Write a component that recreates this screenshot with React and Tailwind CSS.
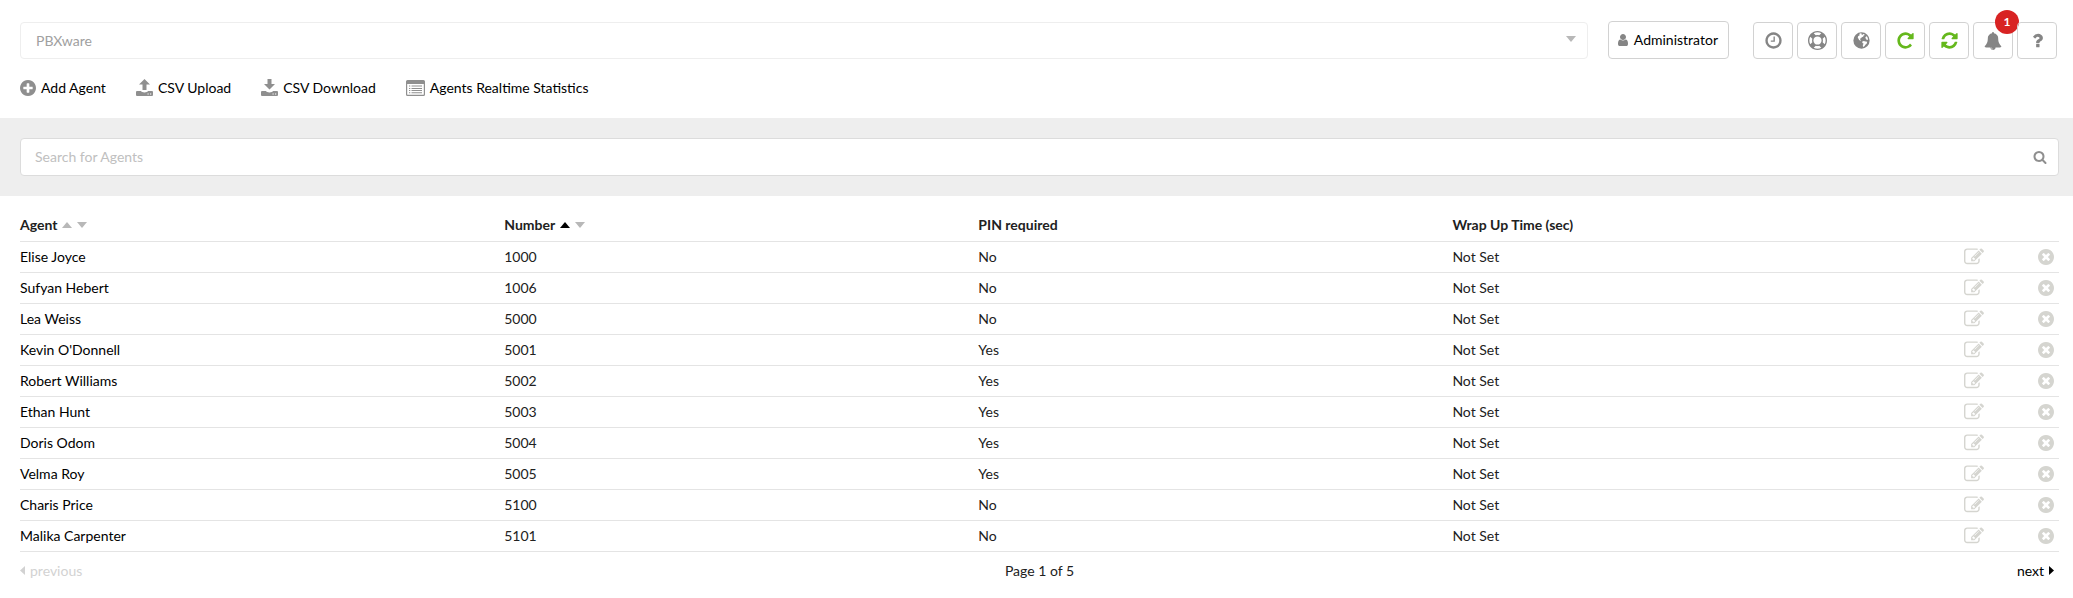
import React, { useState } from 'react';

const ICONS = {
  plus: 'M1344 960v-128q0-26-19-45t-45-19h-256v-256q0-26-19-45t-45-19h-128q-26 0-45 19t-19 45v256h-256q-26 0-45 19t-19 45v128q0 26 19 45t45 19h256v256q0 26 19 45t45 19h128q26 0 45-19t19-45v-256h256q26 0 45-19t19-45zm320-64q0 209-103 385.5t-279.5 279.5-385.5 103-385.5-103-279.5-279.5-103-385.5 103-385.5 279.5-279.5 385.5-103 385.5 103 279.5 279.5 103 385.5z',
  remove: 'M1277 1122q0-26-19-45l-181-181 181-181q19-19 19-45 0-27-19-46l-90-90q-19-19-46-19-26 0-45 19l-181 181-181-181q-19-19-45-19-27 0-46 19l-90 90q-19 19-19 46 0 26 19 45l181 181-181 181q-19 19-19 45 0 27 19 46l90 90q19 19 46 19 26 0 45-19l181-181 181 181q19 19 45 19 27 0 46-19l90-90q19-19 19-46zm387-226q0 209-103 385.5t-279.5 279.5-385.5 103-385.5-103-279.5-279.5-103-385.5 103-385.5 279.5-279.5 385.5-103 385.5 103 279.5 279.5 103 385.5z',
  edit: 'M888 1184l116-116-152-152-116 116v56h96v96h56zm440-720q-16-16-33 1l-350 350q-17 17-1 33t33-1l350-350q17-17 1-33zm80 594v190q0 119-84.5 203.5t-203.5 84.5h-832q-119 0-203.5-84.5t-84.5-203.5v-832q0-119 84.5-203.5t203.5-84.5h832q63 0 117 25 15 7 18 23 3 17-9 29l-49 49q-14 14-32 8-23-6-45-6h-832q-66 0-113 47t-47 113v832q0 66 47 113t113 47h832q66 0 113-47t47-113v-126q0-13 9-22l64-64q15-15 35-7t20 29zm-96-738l288 288-672 672h-288v-288zm444 132l-92 92-288-288 92-92q28-28 68-28t68 28l152 152q28 28 28 68t-28 68z',
  clock: 'M1024 544v448q0 14-9 23t-23 9h-320q-14 0-23-9t-9-23v-64q0-14 9-23t23-9h224v-352q0-14 9-23t23-9h64q14 0 23 9t9 23zm416 352q0-148-73-273t-198-198-273-73-273 73-198 198-73 273 73 273 198 198 273 73 273-73 198-198 73-273zm224 0q0 209-103 385.5t-279.5 279.5-385.5 103-385.5-103-279.5-279.5-103-385.5 103-385.5 279.5-279.5 385.5-103 385.5 103 279.5 279.5 103 385.5z',
  ring: 'M896 0q182 0 348 71t286 191 191 286 71 348-71 348-191 286-286 191-348 71-348-71-286-191-191-286-71-348 71-348 191-286 286-191 348-71zm0 128q-190 0-361 90l194 194q82-28 167-28t167 28l194-194q-171-90-361-90zm-678 1129l194-194q-28-82-28-167t28-167l-194-194q-90 171-90 361t90 361zm678 407q190 0 361-90l-194-194q-82 28-167 28t-167-28l-194 194q171 90 361 90zm0-384q159 0 271.5-112.5t112.5-271.5-112.5-271.5-271.5-112.5-271.5 112.5-112.5 271.5 112.5 271.5 271.5 112.5zm484-217l194 194q90-171 90-361t-90-361l-194 194q28 82 28 167t-28 167z',
  globe: 'M896 128a768 768 0 1 0 0 1536a768 768 0 1 0 0-1536zM700 260l120-40 110 30-40 90 90 30 60-90 110 20 60 70-110 60-50 110-130 40-60 110-110 30 10 90 90 50-50 50-130-60-70-150-60-90 50-130 120-60zM1330 500l100 50 70 160-20 150-90-20-60-110-80-60zM950 1010l150-70 180 60 150 20-50 180-120 100-90 140-130 60-20-170 80-120-110-90z',
  repeat: 'M1664 256v448q0 26-19 45t-45 19h-448q-42 0-59-40-17-39 14-69l138-138q-148-137-349-137-104 0-198.5 40.5t-163.5 109.5-109.5 163.5-40.5 198.5 40.5 198.5 109.5 163.5 163.5 109.5 198.5 40.5q119 0 225-52t179-147q7-10 23-12 15 0 25 9l137 138q9 8 9.5 20.5t-7.5 22.5q-109 132-264 204.5t-327 72.5q-156 0-298-61t-245-164-164-245-61-298 61-298 164-245 245-164 298-61q147 0 284.5 55.5t244.5 156.5l130-129q29-31 70-14 39 17 39 59z',
  refresh: 'M1639 1056q0 5-1 7-64 268-268 434.5t-478 166.5q-146 0-282.5-55t-243.5-157l-129 129q-19 19-45 19t-45-19-19-45v-448q0-26 19-45t45-19h448q26 0 45 19t19 45-19 45l-137 137q71 66 161 102t187 36q134 0 250-65t186-179q11-17 53-117 8-23 30-23h192q13 0 22.5 9.5t9.5 22.5zm25-800v448q0 26-19 45t-45 19h-448q-26 0-45-19t-19-45 19-45l138-138q-148-137-349-137-134 0-250 65t-186 179q-11 17-53 117-8 23-30 23h-199q-13 0-22.5-9.5t-9.5-22.5v-7q65-268 270-434.5t480-166.5q146 0 284 55.5t245 156.5l130-129q19-19 45-19t45 19 19 45z',
  bell: 'M912 1696q0-16-16-16-59 0-101.5-42.5t-42.5-101.5q0-16-16-16t-16 16q0 73 51.5 124.5t124.5 51.5q16 0 16-16zm816-288q0 52-38 90t-90 38h-448q0 106-75 181t-181 75-181-75-75-181h-448q-52 0-90-38t-38-90q50-42 91-88t85-119.5 74.5-158.5 50-206 19.5-260q0-152 117-282.5t307-158.5q-8-19-8-39 0-40 28-68t68-28 68 28 28 68q0 20-8 39 190 28 307 158.5t117 282.5q0 139 19.5 260t50 206 74.5 158.5 85 119.5 91 88z',
  question: 'M1088 1256v240q0 16-12 28t-28 12h-240q-16 0-28-12t-12-28v-240q0-16 12-28t28-12h240q16 0 28 12t12 28zm316-600q0 54-15.5 101t-35 76.5-55 59.5-57.5 43.5-61 35.5q-41 23-68.5 65t-27.5 67q0 17-12 32.5t-28 15.5h-240q-15 0-25.5-18.5t-10.5-37.5v-45q0-83 65-156.5t143-108.5q59-27 84-56t25-76q0-42-46.5-74t-107.5-32q-65 0-108 29-35 25-107 115-13 16-31 16-12 0-25-8l-164-125q-13-10-15.5-25t5.5-28q160-266 464-266 80 0 161 31t146 83 106 127.5 41 158.5z',
  search: 'M1216 832q0-185-131.5-316.5t-316.5-131.5-316.5 131.5-131.5 316.5 131.5 316.5 316.5 131.5 316.5-131.5 131.5-316.5zm512 832q0 52-38 90t-90 38q-54 0-90-38l-343-342q-179 124-399 124-143 0-273.5-55.5t-225-150-150-225-55.5-273.5 55.5-273.5 150-225 225-150 273.5-55.5 273.5 55.5 225 150 150 225 55.5 273.5q0 220-124 399l343 343q37 37 37 90z',
  user: 'M1536 1399q0 109-62.5 187t-150.5 78h-854q-88 0-150.5-78t-62.5-187q0-85 8.5-160.5t31.5-152 58.5-131 94-89 134.5-34.5q131 128 313 128t313-128q76 0 134.5 34.5t94 89 58.5 131 31.5 152 8.5 160.5zm-256-887q0 159-112.5 271.5t-271.5 112.5-271.5-112.5-112.5-271.5 112.5-271.5 271.5-112.5 271.5 112.5 112.5 271.5z',
};

// `tight` trims the empty margin around the round icons
function Icon({ name, tight, className }) {
  return (
    <svg
      viewBox={tight ? '128 128 1536 1536' : '0 0 1792 1792'}
      fill="currentColor"
      fillRule={name === 'globe' ? 'evenodd' : 'nonzero'}
      className={className}
      aria-hidden="true"
    >
      <path d={ICONS[name]} />
    </svg>
  );
}

function TrayIcon({ down }) {
  return (
    <svg viewBox="0 0 17 17" fill="currentColor" className="size-[17px] text-[#8f8f8f]" aria-hidden="true">
      <path d={down ? 'M6.5 0h4v5H14L8.500 10.500 3 5h3.500z' : 'M8.500 0L14 5.500h-3.500V11h-4V5.500H3z'} />
      <path fillRule="evenodd" d="M1 12h4c.6 1 1.800 1.400 3.500 1.400s2.900-.4 3.500-1.400h4q1 0 1 1v3q0 1-1 1H1q-1 0-1-1v-3q0-1 1-1zM11.500 14.500v1h1.200v-1zM14 14.500v1h1.200v-1z" />
    </svg>
  );
}

function ListIcon() {
  return (
    <svg viewBox="0 0 19 16" fill="currentColor" className="h-4 w-[19px] text-[#8f8f8f]" aria-hidden="true">
      <path fillRule="evenodd" d="M1.500 0h16Q19 0 19 1.500v13q0 1.500-1.500 1.500h-16Q0 16 0 14.500v-13Q0 0 1.500 0zM1.200 4v10.300q0 .5.5.5h15.600q.5 0 .5-.5V4z" />
      <path d="M3 5.500h1.300v1H3zM5.500 5.500H16v1H5.500zM3 8h1.300v1H3zM5.500 8H16v1H5.500zM3 10h1.300v1H3zM5.500 10H16v1H5.500zM3 12.300h1.300v1H3zM5.500 12.300H16v1H5.500z" />
    </svg>
  );
}

function Caret({ dir, className }) {
  const paths = { up: 'M0 6L5 0 10 6z', down: 'M0 0h10L5 6z', left: 'M5 0v9L0 4.500z', right: 'M0 0v9l5-4.500z' };
  const flat = dir === 'up' || dir === 'down';
  return (
    <svg
      viewBox={flat ? '0 0 10 6' : '0 0 5 9'}
      fill="currentColor"
      className={`${flat ? 'h-[6px] w-[10px]' : 'h-[9px] w-[5px]'} ${className || ''}`}
      aria-hidden="true"
    >
      <path d={paths[dir]} />
    </svg>
  );
}

const tools = [
  { icon: 'clock', label: 'Clock', size: 'size-[19px]' },
  { icon: 'ring', label: 'Support', size: 'size-[19px]' },
  { icon: 'globe', label: 'Language', size: 'size-[19px]' },
  { icon: 'repeat', label: 'Reload', size: 'size-[19px]', green: true },
  { icon: 'refresh', label: 'Refresh', size: 'size-[19px]', green: true },
  { icon: 'bell', label: 'Notifications', size: 'size-[18px]', badge: 1 },
  { icon: 'question', label: 'Help', size: 'size-[19px]' },
];

const agents = [
  { name: 'Elise Joyce', number: 1000, pin: 'No' },
  { name: 'Sufyan Hebert', number: 1006, pin: 'No' },
  { name: 'Lea Weiss', number: 5000, pin: 'No' },
  { name: "Kevin O'Donnell", number: 5001, pin: 'Yes' },
  { name: 'Robert Williams', number: 5002, pin: 'Yes' },
  { name: 'Ethan Hunt', number: 5003, pin: 'Yes' },
  { name: 'Doris Odom', number: 5004, pin: 'Yes' },
  { name: 'Velma Roy', number: 5005, pin: 'Yes' },
  { name: 'Charis Price', number: 5100, pin: 'No' },
  { name: 'Malika Carpenter', number: 5101, pin: 'No' },
];

function SortHead({ label, active }) {
  return (
    <span className="flex items-center gap-[5px]">
      {label}
      <button aria-label={`Sort by ${label} ascending`} className={active ? 'text-black' : 'text-[#b8b8b8]'}>
        <Caret dir="up" />
      </button>
      <button aria-label={`Sort by ${label} descending`} className="text-[#b8b8b8]">
        <Caret dir="down" />
      </button>
    </span>
  );
}

export default function App() {
  const [search, setSearch] = useState('');

  return (
    <div className="bg-white font-[Lato,sans-serif] text-sm text-[#212121]">
      {/* Top bar */}
      <header className="flex items-end pt-[21px] pr-4 pl-5">
        <div className="relative flex-1">
          <select aria-label="Tenant" disabled className="block h-[37px] w-full appearance-none rounded border border-[#eee] bg-white px-[15px] text-[#a0a0a0] opacity-100">
            <option>PBXware</option>
          </select>
          <Caret dir="down" className="pointer-events-none absolute top-[14px] right-3 text-[#b8b8b8]" />
        </div>
        <button className="ml-5 flex h-[38px] items-center gap-1 rounded border border-[#d2d2d2] pr-[10px] pl-[7px] text-black">
          <Icon name="user" className="size-[14px] text-[#858585]" />
          Administrator
        </button>
        <div className="ml-6 flex gap-1">
          {tools.map((t) => (
            <button key={t.icon} aria-label={t.label} className={`relative flex h-[37px] w-10 items-center justify-center rounded border border-[#d2d2d2] ${t.green ? 'text-[#65b81c]' : 'text-[#858585]'}`}>
              <Icon name={t.icon} className={t.size} />
              {t.badge && (
                <span className="absolute -top-[13px] -right-[7px] flex size-6 items-center justify-center rounded-full bg-[#d82323] text-xs font-bold text-white">
                  {t.badge}
                </span>
              )}
            </button>
          ))}
        </div>
      </header>

      {/* Actions */}
      <nav className="flex h-[59px] items-center gap-[30px] px-5 pb-[2px] text-black">
        <a href="#add" className="flex items-center gap-[5px]">
          <Icon name="plus" tight className="size-4 text-[#8f8f8f]" />
          Add Agent
        </a>
        <a href="#upload" className="flex items-center gap-[5px]">
          <TrayIcon />
          CSV Upload
        </a>
        <a href="#download" className="flex items-center gap-[5px]">
          <TrayIcon down />
          CSV Download
        </a>
        <a href="#stats" className="flex items-center gap-[5px]">
          <ListIcon />
          Agents Realtime Statistics
        </a>
      </nav>

      {/* Search */}
      <div className="bg-[#eee] py-5 pr-[14px] pl-5">
        <div className="relative">
          <input
            aria-label="Search for Agents"
            placeholder="Search for Agents"
            value={search}
            onChange={(e) => setSearch(e.target.value)}
            className="block h-[38px] w-full rounded border border-[#dcdcdc] bg-white px-[14px] pb-[2px] placeholder:text-[#c0c0c0]"
          />
          <button aria-label="Search" className="absolute top-3 right-3 text-[#8f8f8f]">
            <Icon name="search" className="size-[14px]" />
          </button>
        </div>
      </div>

      {/* Agents */}
      <main className="pr-[14px] pl-5">
        <table className="mt-[13px] w-full table-fixed text-left">
          <colgroup>
            <col className="w-[23.75%]" />
            <col className="w-[23.25%]" />
            <col className="w-[23.25%]" />
            <col />
            <col className="w-[59px]" />
            <col className="w-[36px]" />
          </colgroup>
          <thead>
            <tr className="h-8 border-b border-[#e4e4e4]">
              <th><SortHead label="Agent" /></th>
              <th><SortHead label="Number" active /></th>
              <th>PIN required</th>
              <th>Wrap Up Time (sec)</th>
              <th aria-label="Edit" />
              <th aria-label="Delete" />
            </tr>
          </thead>
          <tbody>
            {agents.map((a) => (
              <tr key={a.number} className="h-[31px] border-b border-[#e4e4e4]">
                <td><a href={`#${a.number}`} className="text-black">{a.name}</a></td>
                <td>{a.number}</td>
                <td>{a.pin}</td>
                <td>Not Set</td>
                <td>
                  <button aria-label={`Edit ${a.name}`} className="block text-[#d5d5d0]">
                    <Icon name="edit" className="size-5" />
                  </button>
                </td>
                <td>
                  <button aria-label={`Delete ${a.name}`} className="mr-[5px] ml-auto block text-[#d5d5d0]">
                    <Icon name="remove" tight className="size-4" />
                  </button>
                </td>
              </tr>
            ))}
          </tbody>
        </table>

        <div className="grid h-[38px] grid-cols-3 items-center">
          <button disabled className="flex items-center gap-[5px] justify-self-start text-[#d2d2d2]">
            <Caret dir="left" />
            previous
          </button>
          <span className="justify-self-center">Page 1 of 5</span>
          <button className="mr-[5px] flex items-center gap-[5px] justify-self-end text-black">
            next
            <Caret dir="right" />
          </button>
        </div>
      </main>
    </div>
  );
}
